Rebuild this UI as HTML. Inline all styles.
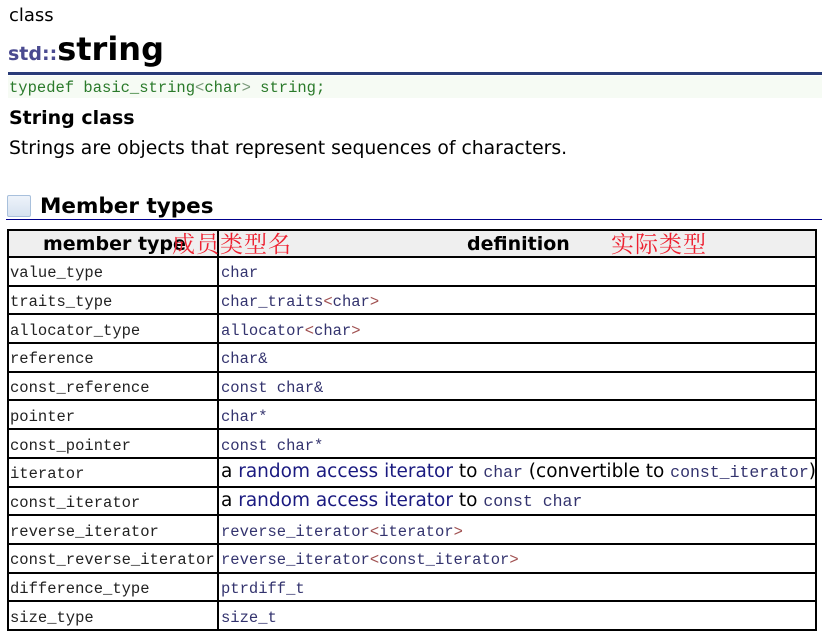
<!DOCTYPE html>
<html><head><meta charset="utf-8"><style>
body{margin:0;background:#fff;width:822px;height:637px;overflow:hidden;position:relative;font-family:"DejaVu Sans","Liberation Sans",sans-serif;}
.a{position:absolute;white-space:nowrap;}
.m{font-family:"Liberation Mono","DejaVu Sans Mono",monospace;font-size:15.5px;}
.hl{position:absolute;left:7px;width:810px;height:2px;background:#000;}
.l{left:10px;color:#222;}
.r{left:221px;color:#33336e;}
.lt{color:#a05050;}
.t{font-size:18.5px;color:#000;}
.t b{font-weight:normal;color:#1a1a80}
.t .m{font-size:16.5px}
.cj{font-size:23px;color:#ee2030;font-family:'Noto Serif CJK SC',serif;letter-spacing:1px}
</style></head><body>
<div class="a" style="left:9px;top:5px;font-size:18px;">class</div>
<div class="a" style="left:8px;top:30px;font-size:32px;font-weight:bold;"><span style="font-size:19px;color:#4a4a90">std::</span>string</div>
<div class="a" style="left:8px;top:72px;width:814px;height:3px;background:#2a3c78"></div>
<div class="a" style="left:8px;top:76px;width:814px;height:22px;background:#f6fbf4"></div>
<div class="a m" style="left:9px;top:79px;color:#2a7a2a;">typedef basic_string<span style="color:#7a9a7a">&lt;</span>char<span style="color:#7a9a7a">&gt;</span> string;</div>
<div class="a" style="left:9px;top:107px;font-size:19px;font-weight:bold;">String class</div>
<div class="a" style="left:9px;top:138px;font-size:18.8px;">Strings are objects that represent sequences of characters.</div>
<div class="a" style="left:7px;top:195px;width:22px;height:20px;border:1px solid #a8c0dc;background:linear-gradient(#eef3fa,#d6e2f0);border-radius:2px"></div>
<div class="a" style="left:40px;top:194px;font-size:21.5px;font-weight:bold;">Member types</div>
<div class="a" style="left:6px;top:219px;width:816px;height:1px;background:#00008a"></div>
<div class="a" style="left:7px;top:229px;width:810px;height:28px;background:#efefef"></div>
<div class="a" style="left:7px;top:229px;width:2px;height:402px;background:#000"></div>
<div class="a" style="left:815px;top:229px;width:2px;height:402px;background:#000"></div>
<div class="a" style="left:217px;top:229px;width:2px;height:402px;background:#000"></div>
<div class="hl" style="top:229px"></div><div class="hl" style="top:256px"></div><div class="hl" style="top:285px"></div><div class="hl" style="top:313px"></div><div class="hl" style="top:342px"></div><div class="hl" style="top:371px"></div><div class="hl" style="top:399px"></div><div class="hl" style="top:428px"></div><div class="hl" style="top:457px"></div><div class="hl" style="top:486px"></div><div class="hl" style="top:514px"></div><div class="hl" style="top:543px"></div><div class="hl" style="top:572px"></div><div class="hl" style="top:600px"></div><div class="hl" style="top:629px"></div>
<div class="a" style="left:43px;top:233px;font-size:19px;font-weight:bold;">member type</div>
<div class="a" style="left:467px;top:233px;font-size:19px;font-weight:bold;">definition</div>
<div class="a cj" style="left:172px;top:226px;">成员类型名</div>
<div class="a cj" style="left:611px;top:226px;">实际类型</div>
<div class="a m l" style="top:264px">value_type</div><div class="a m r" style="top:264px">char</div>
<div class="a m l" style="top:293px">traits_type</div><div class="a m r" style="top:293px">char_traits<span class="lt">&lt;</span>char<span class="lt">&gt;</span></div>
<div class="a m l" style="top:322px">allocator_type</div><div class="a m r" style="top:322px">allocator<span class="lt">&lt;</span>char<span class="lt">&gt;</span></div>
<div class="a m l" style="top:350px">reference</div><div class="a m r" style="top:350px">char&amp;</div>
<div class="a m l" style="top:379px">const_reference</div><div class="a m r" style="top:379px">const char&amp;</div>
<div class="a m l" style="top:408px">pointer</div><div class="a m r" style="top:408px">char*</div>
<div class="a m l" style="top:437px">const_pointer</div><div class="a m r" style="top:437px">const char*</div>
<div class="a m l" style="top:465px">iterator</div><div class="a t" style="left:221px;top:461px">a <b>random access iterator</b> to <span class="m" style="color:#33336e">char</span> (convertible to <span class="m" style="color:#33336e">const_iterator</span>)</div>
<div class="a m l" style="top:494px">const_iterator</div><div class="a t" style="left:221px;top:490px">a <b>random access iterator</b> to <span class="m" style="color:#33336e">const char</span></div>
<div class="a m l" style="top:523px">reverse_iterator</div><div class="a m r" style="top:523px">reverse_iterator<span class="lt">&lt;</span>iterator<span class="lt">&gt;</span></div>
<div class="a m l" style="top:551px">const_reverse_iterator</div><div class="a m r" style="top:551px">reverse_iterator<span class="lt">&lt;</span>const_iterator<span class="lt">&gt;</span></div>
<div class="a m l" style="top:580px">difference_type</div><div class="a m r" style="top:580px">ptrdiff_t</div>
<div class="a m l" style="top:609px">size_type</div><div class="a m r" style="top:609px">size_t</div>
</body></html>
